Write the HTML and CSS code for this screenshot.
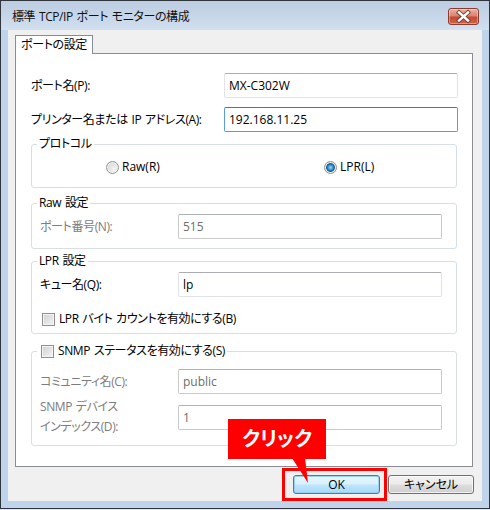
FILE: index.html
```html
<!DOCTYPE html>
<html lang="ja">
<head>
  <meta charset="UTF-8" />
  <meta name="viewport" content="width=device-width, initial-scale=1.0"/>
  <title>標準 TCP/IP ポート モニターの構成</title>
  <link rel="stylesheet" href="styles.css">
</head>
<body>
  <div class="window">
    <div class="titlebar">
      <span class="title">標準 TCP/IP ポート モニターの構成</span>
      <button class="close-btn" title="閉じる">
        <svg width="31" height="17" viewBox="0 0 31 17">
          <path d="M11 4.5 L20 12.5 M20 4.5 L11 12.5" stroke="#6e3a31" stroke-width="4.2" stroke-linecap="square"/>
          <path d="M11 4.5 L20 12.5 M20 4.5 L11 12.5" stroke="#fff" stroke-width="2.4" stroke-linecap="square"/>
        </svg>
      </button>
    </div>

    <div class="client">
      <div class="tabs">
        <div class="tab active">ポートの設定</div>
      </div>

      <div class="tab-panel">
        <div class="row">
          <label>ポート名(P):</label>
          <input class="field" type="text" value="MX-C302W">
        </div>
        <div class="row">
          <label>プリンター名または IP アドレス(A):</label>
          <input class="field focused" type="text" value="192.168.11.25">
        </div>

        <fieldset class="group protocol">
          <legend>プロトコル</legend>
          <div class="radios">
            <label class="radio"><span class="dot"></span>Raw(R)</label>
            <label class="radio checked"><span class="dot"></span>LPR(L)</label>
          </div>
        </fieldset>

        <fieldset class="group raw">
          <legend>Raw 設定</legend>
          <div class="grid">
            <label class="off">ポート番号(N):</label>
            <input class="field" type="text" value="515" disabled>
          </div>
        </fieldset>

        <fieldset class="group lpr">
          <legend>LPR 設定</legend>
          <div class="grid">
            <label>キュー名(Q):</label>
            <input class="field" type="text" value="lp">
          </div>
          <label class="check-row"><span class="box"></span>LPR バイト カウントを有効にする(B)</label>
        </fieldset>

        <fieldset class="group snmp">
          <legend><label class="check-row"><span class="box"></span>SNMP ステータスを有効にする(S)</label></legend>
          <div class="grid">
            <label class="off">コミュニティ名(C):</label>
            <input class="field" type="text" value="public" disabled>
            <label class="off two-line">SNMP デバイス<br>インデックス(D):</label>
            <input class="field" type="text" value="1" disabled>
          </div>
        </fieldset>
      </div>

      <div class="buttons">
        <button class="btn default">OK</button>
        <button class="btn">キャンセル</button>
      </div>
    </div>
  </div>

  <!-- 操作ガイド -->
  <div class="highlight"></div>
  <div class="callout">クリック</div>
  <svg class="callout-tail" width="20" height="28" viewBox="0 0 20 28">
    <polygon points="2,0 15,0 18,25" fill="#ff0000"/>
  </svg>
</body>
</html>
```

FILE: styles.css
```css
* {
  box-sizing: border-box;
}

body {
  margin: 0;
  background: #d3ebf3;
  font-family: "Open Sans", "Noto Sans CJK JP", sans-serif;
  font-size: 12px;
  line-height: 16px;
  letter-spacing: -0.4px;
  word-spacing: 1px;
  color: #000;
  font-feature-settings: "palt";
}

.window {
  width: 490px;
  height: 509px;
  border: 1px solid #30353c;
  background: #bfd4eb;
  display: flex;
  flex-direction: column;
}

/* title bar */
.titlebar {
  height: 29px;
  flex: none;
  display: flex;
  justify-content: space-between;
  align-items: flex-start;
  padding: 0 10px 0 11px;
  background: linear-gradient(#bccde2, #c8d8ea 60%, #d2e0ef);
}

.title {
  margin-top: 8px;
  color: #111;
}

.close-btn {
  margin-top: 7px;
  width: 31px;
  height: 17px;
  padding: 0;
  border: 1px solid #8d3b2f;
  border-radius: 3px;
  background: linear-gradient(#eab1a5, #d98470 45%, #c64a33 55%, #d0634b);
  box-shadow: inset 0 0 0 1px rgba(255,255,255,0.35);
  display: flex;
  align-items: center;
  justify-content: center;
}

.close-btn svg {
  display: block;
  margin: -1px;
}

/* client area */
.client {
  flex: 1;
  margin: 0 7px 7px;
  padding: 5px 9px 0 7px;
  background: #f0f0f0;
  display: flex;
  flex-direction: column;
}

.tabs {
  display: flex;
  height: 18px;
}

.tab {
  position: relative;
  z-index: 1;
  width: 78px;
  height: 19px;
  border: 1px solid #898c95;
  border-bottom: none;
  background: #fff;
  text-align: center;
  line-height: 18px;
}

.tab-panel {
  height: 414px;
  border: 1px solid #898c95;
  background: #fff;
  padding: 19px 14px 0 15px;
}

.row {
  display: grid;
  grid-template-columns: 193px 234px;
  align-items: center;
}

.row + .row {
  margin-top: 9px;
}

.field {
  height: 25px;
  width: 100%;
  padding: 0 4px;
  border: 1px solid #e2e3ea;
  border-top-color: #abadb3;
  border-radius: 2px;
  background: #fff;
  font: inherit;
  letter-spacing: 0;
  color: #000;
  outline: none;
}

.field.focused {
  border-color: #569de5;
  border-top-color: #3d7bad;
}

.field:disabled {
  border-color: #c9c9c9;
  border-top-color: #adb2b5;
  background: #fff;
  color: #6d6d6d;
}

/* group boxes */
.group {
  margin: 0 1px 0 0;
  padding: 0 14px 0 8px;
  border: 1px solid #d5dfe5;
  border-radius: 3px;
  min-width: 0;
}

.group legend {
  margin-left: -3px;
  padding: 0 2px;
  line-height: 16px;
}

.protocol {
  margin-top: 4px;
  padding-bottom: 12px;
}

.raw {
  margin-top: 7px;
  padding-bottom: 9px;
}

.lpr {
  margin-top: 4px;
  padding-bottom: 6px;
}

.snmp {
  margin-top: 9px;
  padding-bottom: 8px;
}

.grid {
  display: grid;
  grid-template-columns: 138px 264px;
  align-items: center;
  row-gap: 3px;
  margin-top: 3px;
}

.snmp .grid {
  margin-top: 10px;
}

.off {
  color: #7c7c7c;
}

.two-line {
  line-height: 20px;
}

/* radio buttons */
.radios {
  display: grid;
  grid-template-columns: 218px auto;
  margin-top: 7px;
  padding-left: 66px;
}

.radio {
  display: flex;
  align-items: center;
  gap: 3px;
  letter-spacing: 0;
}

.dot {
  width: 13px;
  height: 13px;
  border: 1px solid #8e8f8f;
  border-radius: 50%;
  background: radial-gradient(circle at 65% 65%, #f4f4f4 0%, #dedede 60%, #cfcfcf 100%);
  box-shadow: inset 0 0 0 1px #f6f6f6;
}

.radio.checked .dot {
  background: radial-gradient(circle, #9fdcfb 0%, #2b8bd0 35%, #14507a 55%, #cfcfcf 62%, #efefef 100%);
}

/* check boxes */
.check-row {
  display: flex;
  align-items: center;
  gap: 4px;
}

.lpr .check-row {
  margin-top: 14px;
  padding-left: 2px;
}

.snmp legend .check-row {
  padding-left: 2px;
}

.box {
  width: 13px;
  height: 13px;
  border: 1px solid #8e8f8f;
  background: linear-gradient(135deg, #d0d0d0, #f4f4f4);
  box-shadow: inset 0 0 0 1px #f4f4f4;
}

/* dialog buttons */
.buttons {
  display: flex;
  justify-content: flex-end;
  gap: 8px;
  margin-top: 8px;
  margin-right: -1px;
}

.btn {
  width: 86px;
  height: 19px;
  padding: 0;
  border: 1px solid #707070;
  border-radius: 3px;
  background: linear-gradient(#f2f2f2, #ebebeb 48%, #dddddd 52%, #cfcfcf);
  box-shadow: inset 0 0 0 1px rgba(255,255,255,0.7);
  font: inherit;
  color: #000;
}

.btn.default {
  width: 87px;
  border-color: #3c7fb1;
  background: linear-gradient(#eaf6fd, #d9f0fc 48%, #bee6fd 52%, #a7d9f5);
  box-shadow: inset 0 0 0 1px #97d0f0;
}

/* guide overlay */
.highlight {
  position: absolute;
  left: 282px;
  top: 468px;
  width: 105px;
  height: 33px;
  border: 3px solid #ff0000;
}

.callout {
  position: absolute;
  left: 228px;
  top: 419px;
  width: 98px;
  height: 40px;
  background: #ff0000;
  color: #fff;
  font-size: 20px;
  font-weight: bold;
  line-height: 40px;
  letter-spacing: 0;
  word-spacing: 0;
  text-align: center;
}

.callout-tail {
  position: absolute;
  left: 290px;
  top: 458px;
}
```
